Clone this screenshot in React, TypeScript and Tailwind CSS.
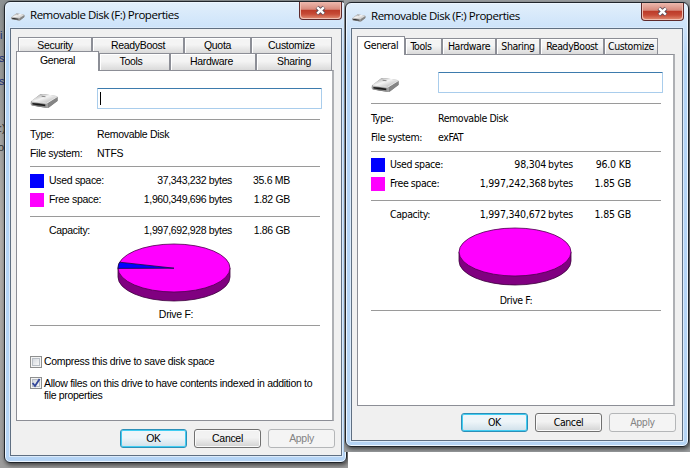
import React from "react";

type Variant = "left" | "right";

function DriveIcon({ className }: { className: string }) {
  return (
    <svg viewBox="0 0 30 18" className={className} preserveAspectRatio="none">
      <defs>
        <linearGradient id="driveTop" x1="0" y1="0" x2="1" y2="1">
          <stop offset="0" stopColor="#8e8e8e" />
          <stop offset="0.45" stopColor="#f4f4f4" />
          <stop offset="1" stopColor="#a4a4a4" />
        </linearGradient>
        <linearGradient id="driveFront" x1="0" y1="0" x2="1" y2="0">
          <stop offset="0" stopColor="#a8a8a8" />
          <stop offset="0.4" stopColor="#6b6b6b" />
          <stop offset="1" stopColor="#a8a8a8" />
        </linearGradient>
      </defs>
      <path d="M1 9.5 L10 2 Q11 1 13 1.2 L27 3.4 Q28.5 3.8 28.5 5 V9 L19.5 16.4 Q18.5 17.2 17 16.9 L2 14 Q0.8 13.5 0.8 12.5 Z" fill="#7c7c7c" />
      <path d="M1.2 9 L10 2 Q11.2 0.9 13.5 1.1 L27 3.2 Q28.8 3.6 27.5 4.9 L19 11 Q18 11.8 16.5 11.5 L2 9.8 Z" fill="url(#driveTop)" />
      <path d="M1 9.6 L16.5 11.6 Q18 11.8 18.5 11.4 V16.9 L2 14 Q0.8 13.6 0.8 12.5 Z" fill="url(#driveFront)" />
      <path d="M2.5 11.2 L15.8 13 V14.9 L2.5 13 Z" fill="#1b1b1b" />
      <path d="M18.8 11.4 L28.5 4.6 V8.8 L19.2 16.6 Z" fill="#858585" />
      <path d="M2 9.8 L17 11.6 L28 4.4" fill="none" stroke="#ededed" strokeWidth="0.9" />
      <path d="M12 3.6 L16 4.2" stroke="#8b8b8b" strokeWidth="1.2" />
    </svg>
  );
}

function Pie({ used }: { used: boolean }) {
  return (
    <svg width="114" height="60" viewBox="0 0 114 60" className="block">
      <path d="M1 25 V34 A56 24 0 0 0 113 34 V25 Z" fill="#800080" stroke="#3c003c" strokeWidth="0.8" />
      <ellipse cx="57" cy="25" rx="56" ry="24" fill="#ff00ff" stroke="#4a004a" strokeWidth="0.8" />
      {used && <path d="M57 25.2 L2.6 19.2 Q1 22 1 25.4 Z" fill="#0000ff" stroke="#101040" strokeWidth="0.8" />}
    </svg>
  );
}

function CloseButton() {
  return (
    <div className="h-[18px] w-[43px] overflow-hidden rounded-b-[4px] border border-t-0 border-[#5e2a2c] bg-[#f0bfb2] px-px pb-px">
      <div className="flex h-full w-full items-center justify-center rounded-b-[3px] [background-image:linear-gradient(to_bottom,#ecb9ae_0%,#d78a7c_46%,#bb3a28_50%,#c64a36_75%,#dc8168_100%)]">
        <svg width="13" height="11" viewBox="0 0 13 11">
          <path d="M3 2.2 L10 8.8 M10 2.2 L3 8.8" stroke="#5b4a55" strokeWidth="4.2" />
          <path d="M3.2 2.3 L9.8 8.7 M9.8 2.3 L3.2 8.7" stroke="#fff" strokeWidth="2.4" />
        </svg>
      </div>
    </div>
  );
}

function TitleBar({ variant }: { variant: Variant }) {
  const left = variant === "left";
  return (
    <div className={`flex w-full items-start ${left ? "h-[26px]" : "h-[25px]"}`}>
      <DriveIcon className="ml-[6px] mt-[11px] h-[8px] w-[14px]" />
      <span className={`ml-[5px] whitespace-nowrap font-['Open_Sans',sans-serif] text-[11.5px] leading-[17px] tracking-[-0.47px] text-black ${left ? "mt-[4px]" : "mt-[4px]"}`}>
        Removable Disk (F:) Properties
      </span>
      <div className="ml-auto mr-[4px]">
        <CloseButton />
      </div>
    </div>
  );
}

function Tab({ label, className }: { label: string; className: string }) {
  return (
    <div className={`flex items-center justify-center whitespace-nowrap border border-b-0 border-[#8c8e96] bg-linear-to-b from-[#f4f4f4] from-45% to-[#dadada] shadow-[inset_1px_1px_0_#fff] ${className}`}>
      {label}
    </div>
  );
}

function ActiveTab({ className }: { className: string }) {
  return (
    <div className={`relative z-10 flex items-center justify-center whitespace-nowrap border border-b-0 border-[#8c8e96] bg-white ${className}`}>
      General
    </div>
  );
}

function Rule({ className }: { className: string }) {
  return <div className={`h-px w-[290px] shrink-0 bg-[#9a9a9a] ${className}`} />;
}

function SpaceRow({ variant, color, label, bytes, size }: { variant: Variant; color?: string; label: string; bytes: string; size: string }) {
  const left = variant === "left";
  return (
    <div className="flex h-[19px] items-center whitespace-nowrap">
      <div className={`h-[14px] w-[14px] ${color ?? ""}`} />
      <span className="ml-[5px] w-[75px]">{label}</span>
      <span className={`w-[108px] text-right ${left ? "[word-spacing:0px] tracking-[-0.37px]" : "[word-spacing:-1px] tracking-[-0.2px]"}`}>{bytes} bytes</span>
      <span className={`w-[58px] text-right ${left ? "" : "tracking-[-0.2px]"}`}>{size}</span>
    </div>
  );
}

interface Details {
  fs: string;
  used: string;
  usedSize: string;
  free: string;
  freeSize: string;
  capacity: string;
  capacitySize: string;
}

function PanelBody({ variant, d }: { variant: Variant; d: Details }) {
  const left = variant === "left";
  return (
    <>
      <div className="mt-[17px] flex h-[21px] items-start">
        <DriveIcon className="mt-[5px] h-[16px] w-[29px]" />
        <div className="ml-[38px] flex h-[21px] w-[225px] items-center rounded-[1px] border border-[#a9cdec] border-t-[#3d7bad] bg-white">
          {left && <div className="ml-[2px] h-[13px] w-px bg-black" />}
        </div>
      </div>
      <Rule className="mt-[10px]" />
      <div className="mt-[5px] flex h-[19px] items-center whitespace-nowrap">
        <span className="w-[67px]">Type:</span>
        <span>Removable Disk</span>
      </div>
      <div className="flex h-[19px] items-center whitespace-nowrap">
        <span className="w-[67px]">File system:</span>
        <span>{d.fs}</span>
      </div>
      <Rule className={left ? "mt-[3px]" : "mt-[4px]"} />
      <div className={left ? "mt-[4px]" : "mt-[3px]"}>
        <SpaceRow variant={variant} color="bg-[#0000ff]" label="Used space:" bytes={d.used} size={d.usedSize} />
        <SpaceRow variant={variant} color="bg-[#ff00ff]" label="Free space:" bytes={d.free} size={d.freeSize} />
      </div>
      <Rule className="mt-[7px]" />
      <div className="mt-[4px]">
        <SpaceRow variant={variant} label="Capacity:" bytes={d.capacity} size={d.capacitySize} />
      </div>
      <div className="ml-[87px] mt-[3px]">
        <Pie used={left} />
      </div>
      <div className={`flex h-[19px] w-[290px] items-center justify-center ${left ? "mt-[2px] pl-[2px]" : "mt-[4px]"}`}>
        <span>Drive F:</span>
      </div>
      <Rule className={left ? "mt-[1px]" : "mt-0"} />
    </>
  );
}

function Checkbox({ checked }: { checked?: boolean }) {
  return (
    <div className="flex h-[12px] w-[12px] shrink-0 items-center justify-center border border-[#8e8f8f] bg-[#f4f4f4]">
      <div className="flex h-[8px] w-[8px] items-center justify-center border border-[#b9bfc6] bg-linear-to-br from-[#d5d9df] to-[#f8f8f8]">
        {checked && (
          <svg width="10" height="10" viewBox="0 0 10 10" className="shrink-0">
            <path d="M1.6 5 L4 8 L8.6 1" fill="none" stroke="#34489a" strokeWidth="1.9" />
          </svg>
        )}
      </div>
    </div>
  );
}

function Buttons({ className }: { className: string }) {
  return (
    <div className={`flex ${className}`}>
      <button className="h-[19px] w-[67px] rounded-[3px] border border-[#2c8fb8] bg-linear-to-b from-[#eef5f9] from-45% to-[#cfe0ea] shadow-[inset_0_0_0_1px_#41cdf2]">OK</button>
      <button className="ml-[7px] h-[19px] w-[67px] rounded-[3px] border border-[#707070] bg-linear-to-b from-[#f2f2f2] from-45% to-[#d2d2d2] shadow-[inset_0_0_0_1px_#fafafa]">Cancel</button>
      <button className="ml-[7px] h-[19px] w-[67px] rounded-[3px] border border-[#b4b6b8] bg-[#f4f4f4] text-[#838383]">Apply</button>
    </div>
  );
}

function LeftWindow() {
  return (
    <div className="absolute left-[4px] top-[1px] h-[462px] w-[343px] rounded-[6px] border border-[#20252b] bg-linear-to-b from-[#e2effb] via-[#b4d5f8] via-[12%] to-[#b5d4f5] shadow-[inset_0_0_0_1px_#edf6ff,1px_2px_4px_rgba(0,0,0,0.6)]">
      <TitleBar variant="left" />
      <div className="ml-[5px] flex h-[428px] w-[332px] flex-col border border-[#5f6f82] bg-[#f0f0f0] font-['Liberation_Sans',Arial,sans-serif] text-[10.5px] tracking-[-0.31px] text-black shadow-[0_0_0_1px_#dbeafa]">
        <div className="ml-[7px] mt-[8px] flex h-[16px]">
          <Tab label="Security" className="w-[74px]" />
          <Tab label="ReadyBoost" className="w-[92px]" />
          <Tab label="Quota" className="w-[67px]" />
          <Tab label="Customize" className="w-[81px]" />
        </div>
        <div className="ml-[5px] flex h-[17px] items-end">
          <ActiveTab className="-mb-px h-[20px] w-[83px] pb-[1px]" />
          <Tab label="Tools" className="h-[17px] w-[71px] pr-[7px]" />
          <Tab label="Hardware" className="h-[17px] w-[86px] pr-[3px]" />
          <Tab label="Sharing" className="h-[17px] w-[76px]" />
        </div>
        <div className="ml-[5px] flex h-[351px] w-[318px] flex-col border border-r-2 border-[#8c8e96] border-r-[#aeb0b4] bg-white pl-[13px]">
          <PanelBody
            variant="left"
            d={{ fs: "NTFS", used: "37,343,232", usedSize: "35.6 MB", free: "1,960,349,696", freeSize: "1.82 GB", capacity: "1,997,692,928", capacitySize: "1.86 GB" }}
          />
          <div className="mt-[30px] flex h-[12px] items-center gap-[2px] whitespace-nowrap">
            <Checkbox />
            <span>Compress this drive to save disk space</span>
          </div>
          <div className="mt-[9px] flex items-start gap-[2px] whitespace-nowrap leading-[12px]">
            <Checkbox checked />
            <span>
              Allow files on this drive to have contents indexed in addition to
              <br />
              file properties
            </span>
          </div>
        </div>
        <Buttons className="ml-[109px] mt-[8px]" />
      </div>
    </div>
  );
}

function RightWindow() {
  return (
    <div className="absolute left-[345px] top-[2px] h-[445px] w-[344px] rounded-[6px] border border-[#20252b] bg-linear-to-b from-[#e2effb] via-[#b4d5f8] via-[12%] to-[#b5d4f5] shadow-[inset_0_0_0_1px_#edf6ff,1px_2px_4px_rgba(0,0,0,0.6)]">
      <TitleBar variant="right" />
      <div className="ml-[5px] flex h-[413px] w-[332px] flex-col border border-[#5f6f82] bg-[#f0f0f0] font-['DejaVu_Sans_Condensed','DejaVu_Sans',sans-serif] text-[10.5px] tracking-[-0.42px] text-black shadow-[0_0_0_1px_#dbeafa] [font-stretch:condensed]">
        <div className="ml-[5px] mt-[7px] flex h-[18px] items-end">
          <ActiveTab className="-mb-px h-[19px] w-[48px] pb-[1px]" />
          <Tab label="Tools" className="h-[16px] w-[37px] pr-[5px]" />
          <Tab label="Hardware" className="h-[16px] w-[54px]" />
          <Tab label="Sharing" className="h-[16px] w-[44px]" />
          <Tab label="ReadyBoost" className="h-[16px] w-[64px]" />
          <Tab label="Customize" className="h-[16px] w-[54px]" />
        </div>
        <div className="ml-[5px] flex h-[352px] w-[318px] flex-col border border-r-2 border-[#8c8e96] border-r-[#aeb0b4] bg-white pl-[13px]">
          <PanelBody
            variant="right"
            d={{ fs: "exFAT", used: "98,304", usedSize: "96.0 KB", free: "1,997,242,368", freeSize: "1.85 GB", capacity: "1,997,340,672", capacitySize: "1.85 GB" }}
          />
        </div>
        <Buttons className="ml-[109px] mt-[7px]" />
      </div>
    </div>
  );
}

export default function App() {
  return (
    <div className="relative h-[468px] w-[690px] overflow-hidden bg-white">
      <div className="absolute left-0 top-0 h-[468px] w-[348px] overflow-hidden bg-linear-to-b from-[#8d9192] via-[#b3b0ad] via-50% to-[#9c9c9c]">
        <div className="flex flex-col pt-[24px] font-['Liberation_Sans',sans-serif] text-[11px] leading-[23px] text-[#1c2f78]">
          <span>i</span>
          <span className="-ml-px">s</span>
          <span className="-ml-px">s</span>
          <span className="mt-[24px] -ml-px text-[#333]">:)</span>
          <span className="-ml-[2px] -mt-[4px] text-[#333]">o</span>
        </div>
        <LeftWindow />
      </div>
      <div className="absolute left-[344px] top-0 h-[452px] w-[346px] overflow-hidden bg-[#9a9d9f]">
        <div className="absolute -left-[344px] top-0">
          <RightWindow />
        </div>
      </div>
    </div>
  );
}
